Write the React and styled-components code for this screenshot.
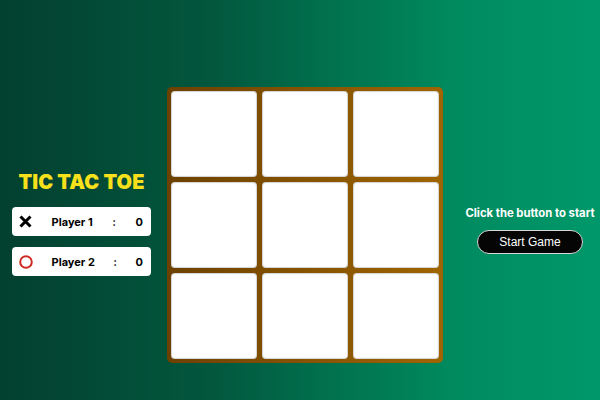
import React from "react";
import styled, { createGlobalStyle } from "styled-components";

const GlobalStyle = createGlobalStyle`
  html, body {
    margin: 0;
    padding: 0;
  }
  body {
    font-family: "Inter", "Liberation Sans", sans-serif;
  }
`;

const Page = styled.div`
  width: 600px;
  height: 400px;
  display: flex;
  align-items: center;
  padding: 50px 0 0 12px;
  box-sizing: border-box;
  background: linear-gradient(to right, #03402f 0%, #02573d 35%, #008a5e 75%, #00986a 100%);
`;

const Side = styled.div`
  width: 139px;
  flex-shrink: 0;
  display: flex;
  flex-direction: column;
  align-items: center;
  margin-top: -4px;
`;

const Title = styled.h1`
  margin: 0 0 13px;
  font-size: 20px;
  font-weight: 900;
  color: #f7e11b;
  letter-spacing: 0.1px;
`;

const PlayerCard = styled.div`
  width: 100%;
  height: 29px;
  box-sizing: border-box;
  background: #fff;
  border-radius: 4px;
  display: flex;
  align-items: center;
  justify-content: space-between;
  padding: 0 8px 0 7px;
  margin-bottom: 11px;
  font-size: 11px;
  font-weight: 700;
  color: #000;
  &:last-child {
    margin-bottom: 0;
  }
`;

const Board = styled.div`
  margin-left: 16px;
  width: 276px;
  height: 276px;
  flex-shrink: 0;
  box-sizing: border-box;
  padding: 4px;
  display: grid;
  grid-template-columns: repeat(3, 86px);
  grid-template-rows: repeat(3, 86px);
  gap: 5px;
  border-radius: 5px;
  background: linear-gradient(to right, #6c4100, #a06500);
`;

const Cell = styled.button`
  border: none;
  padding: 0;
  background: #fff;
  border-radius: 4px;
  box-shadow: inset 0 0 1px 1px rgba(0, 0, 0, 0.18);
  cursor: pointer;
`;

const Controls = styled.div`
  width: 140px;
  flex-shrink: 0;
  margin-left: 17px;
  display: flex;
  flex-direction: column;
  align-items: center;
  margin-top: 10px;
`;

const Hint = styled.p`
  margin: 0 0 10px;
  font-size: 11.3px;
  font-weight: 700;
  color: #fff;
  white-space: nowrap;
`;

const StartButton = styled.button`
  width: 106px;
  height: 24px;
  background: #050505;
  color: #fff;
  border: 1px solid #d8d8d8;
  border-radius: 12px;
  font-family: "Liberation Sans", Arial, sans-serif;
  font-size: 12px;
  cursor: pointer;
`;

const XMark = () => (
  <svg width="13" height="13" viewBox="0 0 13 13">
    <path d="M1.5 1.5 L11.5 11.5 M11.5 1.5 L1.5 11.5" stroke="#000" strokeWidth="3" strokeLinecap="butt" />
  </svg>
);

const OMark = () => (
  <svg width="14" height="14" viewBox="0 0 14 14">
    <circle cx="7" cy="7" r="5.8" fill="none" stroke="#cf2a22" strokeWidth="2" />
  </svg>
);

const players = [
  { name: "Player 1", icon: <XMark />, score: 0 },
  { name: "Player 2", icon: <OMark />, score: 0 },
];

export default function App() {
  return (
    <>
      <GlobalStyle />
      <Page>
        <Side>
          <Title>TIC TAC TOE</Title>
          {players.map((p) => (
            <PlayerCard key={p.name}>
              {p.icon}
              <span>{p.name}</span>
              <span>:</span>
              <span>{p.score}</span>
            </PlayerCard>
          ))}
        </Side>
        <Board>
          {Array.from({ length: 9 }).map((_, i) => (
            <Cell key={i} />
          ))}
        </Board>
        <Controls>
          <Hint>Click the button to start</Hint>
          <StartButton>Start Game</StartButton>
        </Controls>
      </Page>
    </>
  );
}
